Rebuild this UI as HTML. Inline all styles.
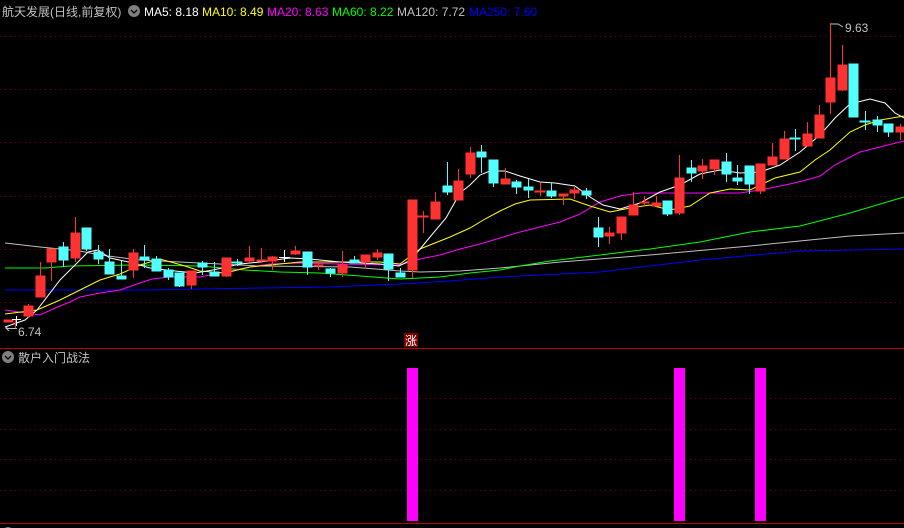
<!DOCTYPE html>
<html><head><meta charset="utf-8"><style>
html,body{margin:0;padding:0;background:#000;width:904px;height:528px;overflow:hidden}
svg{display:block}
text{font-family:"Liberation Sans","Noto Sans CJK SC",sans-serif;font-size:12px}
</style></head><body>
<svg width="904" height="528" viewBox="0 0 904 528" xmlns="http://www.w3.org/2000/svg">
<rect width="904" height="528" fill="#000"/>
<g stroke="#800000" stroke-width="1" stroke-dasharray="1 4">
<line x1="0" y1="36.5" x2="904" y2="36.5"/><line x1="0" y1="89.5" x2="904" y2="89.5"/>
<line x1="0" y1="142.5" x2="904" y2="142.5"/><line x1="0" y1="196.5" x2="904" y2="196.5"/>
<line x1="0" y1="249.5" x2="904" y2="249.5"/><line x1="0" y1="302.5" x2="904" y2="302.5"/>
<line x1="0" y1="398.5" x2="904" y2="398.5"/><line x1="0" y1="429.5" x2="904" y2="429.5"/>
<line x1="0" y1="459.5" x2="904" y2="459.5"/><line x1="0" y1="490.5" x2="904" y2="490.5"/>
</g>
<line x1="0" y1="348.5" x2="904" y2="348.5" stroke="#c00000"/>
<line x1="0" y1="523.5" x2="904" y2="523.5" stroke="#c00000"/>
<g fill="none" stroke-width="1">
<polyline stroke="#0000ff" points="5,290 60,290 150,290 200,289 260,288 330,287 400,284 450,281 500,277 600,272 700,260 800,251 904,249"/>
<polyline stroke="#c0c0c0" points="5,243 40,247 80,251 100,255 140,260 180,262 220,264 260,266 350,267 400,271 420,272 460,271 500,268 560,262 650,255 750,246 850,236 904,233"/>
<polyline stroke="#00ff00" points="5,268 45,268 70,266 140,265 200,266 245,270 280,272 320,273 400,279 440,277 470,273 500,270 520,266 550,261 600,255 650,249 700,242 750,232 800,226 850,213 904,197"/>
<polyline stroke="#ff00ff" points="5,310 40,315 55,308 70,302 80,297 100,293 120,290 140,283 152,279 170,277 200,277 220,273 250,267 270,264 300,263 340,264 400,265 420,259 440,255 460,249 480,244 500,238 520,232 540,227 560,222 580,214 600,202 620,196 640,193 740,193 760,190 790,184 810,179 820,176 835,165 860,152 880,147 904,141"/>
<polyline stroke="#ffff00" points="5,314 37,310 60,300 80,290 100,280 120,274 140,265 160,259 185,266 200,271 225,273 250,267 300,262 380,262 400,264 420,249 450,237 470,228 485,219 500,211 515,204 530,200 570,199 590,206 610,212 630,208 650,205 670,210 690,206 710,193 730,189 750,190 775,178 800,172 815,160 830,150 850,132 865,125 880,120 904,116"/>
<polyline stroke="#ffffff" points="5,327 25,320 37,310 60,280 88,252 98,250 110,258 133,263 150,268 175,271 195,273 213,270 240,264 260,262 290,258 310,259 340,262 380,264 399,266 411,260 430,237 446,218 460,193 470,185 480,175 490,171 505,171 520,176 540,182 555,183 575,186 590,197 603,205 620,209 640,203 660,192 680,185 700,174 720,170 740,173 760,172 780,165 800,152 820,135 835,118 850,104 870,99 885,103 895,113 904,118"/>
</g>
<g stroke-width="1">
<g fill="#ff3232" stroke="#ff3232">
<line x1="28.5" y1="304" x2="28.5" y2="318"/><rect x="24" y="306" width="9" height="10"/>
<line x1="40.5" y1="262" x2="40.5" y2="297"/><rect x="36" y="276" width="9" height="21"/>
<line x1="51.5" y1="249" x2="51.5" y2="281"/><rect x="47" y="249" width="9" height="13"/>
<line x1="75.5" y1="217" x2="75.5" y2="262"/><rect x="71" y="233" width="9" height="25"/>
<line x1="133.5" y1="249" x2="133.5" y2="278"/><rect x="129" y="253" width="9" height="17"/>
<line x1="191.5" y1="271" x2="191.5" y2="289"/><rect x="187" y="271" width="9" height="14"/>
<line x1="226.5" y1="258" x2="226.5" y2="277"/><rect x="222" y="258" width="9" height="18"/>
<line x1="249.5" y1="246" x2="249.5" y2="262"/><rect x="245" y="258" width="9" height="3"/>
<line x1="261.5" y1="248" x2="261.5" y2="263"/><rect x="257" y="260" width="9" height="1"/>
<line x1="272.5" y1="256" x2="272.5" y2="270"/><rect x="268" y="257" width="9" height="4"/>
<line x1="295.5" y1="246" x2="295.5" y2="255"/><rect x="291" y="251" width="9" height="3"/>
<line x1="318.5" y1="263" x2="318.5" y2="270"/><rect x="314" y="265" width="9" height="1"/>
<line x1="342.5" y1="251" x2="342.5" y2="277"/><rect x="338" y="265" width="9" height="8"/>
<line x1="365.5" y1="255" x2="365.5" y2="269"/><rect x="361" y="255" width="9" height="7"/>
<line x1="377.5" y1="249" x2="377.5" y2="260"/><rect x="373" y="253" width="9" height="4"/>
<line x1="412.5" y1="200" x2="412.5" y2="278"/><rect x="408" y="200" width="9" height="70"/>
<line x1="423.5" y1="211" x2="423.5" y2="233"/><rect x="418" y="216" width="10" height="1"/>
<line x1="435.5" y1="192" x2="435.5" y2="219"/><rect x="431" y="202" width="9" height="17"/>
<line x1="458.5" y1="169" x2="458.5" y2="200"/><rect x="454" y="181" width="9" height="19"/>
<line x1="470.5" y1="147" x2="470.5" y2="178"/><rect x="466" y="153" width="9" height="21"/>
<line x1="505.5" y1="168" x2="505.5" y2="184"/><rect x="501" y="179" width="9" height="5"/>
<line x1="540.5" y1="183" x2="540.5" y2="196"/><rect x="535" y="191" width="10" height="1"/>
<line x1="563.5" y1="194" x2="563.5" y2="205"/><rect x="559" y="194" width="9" height="2"/>
<line x1="574.5" y1="186" x2="574.5" y2="199"/><rect x="570" y="190" width="9" height="3"/>
<line x1="609.5" y1="227" x2="609.5" y2="244"/><rect x="605" y="233" width="9" height="3"/>
<line x1="621.5" y1="217" x2="621.5" y2="240"/><rect x="617" y="217" width="9" height="16"/>
<line x1="633.5" y1="192" x2="633.5" y2="215"/><rect x="629" y="205" width="9" height="10"/>
<line x1="644.5" y1="196" x2="644.5" y2="206"/><rect x="640" y="202" width="9" height="1"/>
<line x1="656.5" y1="196" x2="656.5" y2="206"/><rect x="652" y="203" width="9" height="3"/>
<line x1="679.5" y1="155" x2="679.5" y2="215"/><rect x="675" y="178" width="9" height="35"/>
<line x1="702.5" y1="159" x2="702.5" y2="179"/><rect x="698" y="166" width="9" height="5"/>
<line x1="714.5" y1="160" x2="714.5" y2="175"/><rect x="710" y="160" width="9" height="9"/>
<line x1="760.5" y1="164" x2="760.5" y2="194"/><rect x="756" y="164" width="9" height="27"/>
<line x1="772.5" y1="143" x2="772.5" y2="165"/><rect x="768" y="157" width="9" height="8"/>
<line x1="784.5" y1="131" x2="784.5" y2="159"/><rect x="780" y="139" width="9" height="20"/>
<line x1="807.5" y1="122" x2="807.5" y2="146"/><rect x="803" y="134" width="9" height="12"/>
<line x1="819.5" y1="105" x2="819.5" y2="138"/><rect x="815" y="115" width="9" height="23"/>
<line x1="830.5" y1="23" x2="830.5" y2="114"/><rect x="826" y="78" width="9" height="24"/>
<line x1="842.5" y1="45" x2="842.5" y2="91"/><rect x="838" y="65" width="9" height="25"/>
<line x1="900.5" y1="124" x2="900.5" y2="140"/><rect x="896" y="127" width="9" height="5"/>
<line x1="15.5" y1="319" x2="15.5" y2="328"/><rect x="4" y="320" width="9" height="2"/>
</g>
<g fill="#54ffff" stroke="#54ffff">
<line x1="63.5" y1="242" x2="63.5" y2="267"/><rect x="59" y="247" width="9" height="13"/>
<line x1="86.5" y1="228" x2="86.5" y2="251"/><rect x="82" y="228" width="9" height="21"/>
<line x1="98.5" y1="245" x2="98.5" y2="264"/><rect x="94" y="252" width="9" height="7"/>
<line x1="109.5" y1="249" x2="109.5" y2="274"/><rect x="105" y="262" width="9" height="12"/>
<line x1="121.5" y1="261" x2="121.5" y2="279"/><rect x="117" y="276" width="9" height="3"/>
<line x1="144.5" y1="245" x2="144.5" y2="268"/><rect x="140" y="257" width="9" height="3"/>
<line x1="156.5" y1="256" x2="156.5" y2="271"/><rect x="152" y="259" width="9" height="12"/>
<line x1="168.5" y1="268" x2="168.5" y2="280"/><rect x="164" y="270" width="9" height="7"/>
<line x1="179.5" y1="273" x2="179.5" y2="287"/><rect x="175" y="273" width="9" height="13"/>
<line x1="202.5" y1="261" x2="202.5" y2="275"/><rect x="198" y="263" width="9" height="4"/>
<line x1="214.5" y1="262" x2="214.5" y2="276"/><rect x="210" y="272" width="9" height="4"/>
<line x1="237.5" y1="259" x2="237.5" y2="266"/><rect x="232" y="262" width="10" height="1"/>
<line x1="307.5" y1="252" x2="307.5" y2="275"/><rect x="303" y="252" width="9" height="15"/>
<line x1="330.5" y1="268" x2="330.5" y2="277"/><rect x="326" y="269" width="9" height="4"/>
<line x1="354.5" y1="256" x2="354.5" y2="263"/><rect x="350" y="260" width="9" height="3"/>
<line x1="388.5" y1="254" x2="388.5" y2="281"/><rect x="384" y="254" width="9" height="15"/>
<line x1="400.5" y1="268" x2="400.5" y2="277"/><rect x="396" y="273" width="9" height="4"/>
<line x1="447.5" y1="162" x2="447.5" y2="195"/><rect x="443" y="186" width="9" height="6"/>
<line x1="481.5" y1="145" x2="481.5" y2="173"/><rect x="477" y="152" width="9" height="5"/>
<line x1="493.5" y1="160" x2="493.5" y2="187"/><rect x="489" y="160" width="9" height="23"/>
<line x1="516.5" y1="180" x2="516.5" y2="194"/><rect x="512" y="182" width="9" height="5"/>
<line x1="528.5" y1="179" x2="528.5" y2="198"/><rect x="524" y="187" width="9" height="3"/>
<line x1="551.5" y1="183" x2="551.5" y2="198"/><rect x="547" y="191" width="9" height="5"/>
<line x1="586.5" y1="188" x2="586.5" y2="199"/><rect x="582" y="191" width="9" height="4"/>
<line x1="598.5" y1="217" x2="598.5" y2="247"/><rect x="594" y="228" width="9" height="9"/>
<line x1="667.5" y1="201" x2="667.5" y2="216"/><rect x="663" y="201" width="9" height="13"/>
<line x1="691.5" y1="160" x2="691.5" y2="182"/><rect x="687" y="168" width="9" height="5"/>
<line x1="726.5" y1="153" x2="726.5" y2="182"/><rect x="722" y="162" width="9" height="12"/>
<line x1="737.5" y1="165" x2="737.5" y2="185"/><rect x="733" y="178" width="9" height="3"/>
<line x1="749.5" y1="166" x2="749.5" y2="194"/><rect x="745" y="166" width="9" height="18"/>
<line x1="795.5" y1="129" x2="795.5" y2="151"/><rect x="790" y="138" width="10" height="1"/>
<line x1="853.5" y1="64" x2="853.5" y2="117"/><rect x="849" y="64" width="9" height="53"/>
<line x1="865.5" y1="111" x2="865.5" y2="130"/><rect x="860" y="121" width="10" height="1"/>
<line x1="877.5" y1="116" x2="877.5" y2="132"/><rect x="873" y="120" width="9" height="5"/>
<line x1="888.5" y1="124" x2="888.5" y2="137"/><rect x="884" y="124" width="9" height="8"/>
</g>
<g stroke="#fff"><line x1="284.5" y1="250" x2="284.5" y2="262"/><line x1="279" y1="257.5" x2="290" y2="257.5"/>
<line x1="16.5" y1="316" x2="16.5" y2="326"/><line x1="12" y1="319.5" x2="21" y2="319.5"/></g>
</g>
<g stroke="#c0c0c0" fill="none"><line x1="6" y1="328.5" x2="17" y2="328.5"/><polyline points="9,325 6,328 9,331"/>
<polyline points="831,24 838,24 843,27"/></g>
<text x="18" y="336" fill="#c0c0c0">6.74</text>
<text x="845" y="32" fill="#c0c0c0">9.63</text>
<rect x="404" y="333" width="14" height="14" fill="#800000"/>
<text x="405" y="345" fill="#fff">涨</text>
<text x="2" y="16" fill="#c0c0c0">航天发展(日线,前复权)</text>
<circle cx="134" cy="11" r="6" fill="#808080"/><polyline points="131,10 134,13 137,10" stroke="#000" fill="none" stroke-width="1.3"/>
<text x="144" y="16" fill="#ffffff">MA5: 8.18</text>
<text x="202" y="16" fill="#ffff00">MA10: 8.49</text>
<text x="267" y="16" fill="#ff00ff">MA20: 8.63</text>
<text x="332" y="16" fill="#00ff00">MA60: 8.22</text>
<text x="397" y="16" fill="#c0c0c0">MA120: 7.72</text>
<text x="469" y="16" fill="#0000ff">MA250: 7.60</text>
<circle cx="8" cy="357" r="6" fill="#808080"/><polyline points="5,356 8,359 11,356" stroke="#000" fill="none" stroke-width="1.3"/>
<text x="18" y="362" fill="#c0c0c0">散户入门战法</text>
<rect x="407" y="368" width="11" height="153" fill="#ff00ff"/>
<rect x="674" y="368" width="11" height="153" fill="#ff00ff"/>
<rect x="755" y="368" width="11" height="153" fill="#ff00ff"/>
<circle cx="8" cy="533" r="6" fill="#808080"/>
<text x="18" y="537" fill="#c0c0c0">VOL: 12.34</text>
<text x="104" y="537" fill="#ffffff">9.63</text>
<text x="163" y="537" fill="#ffff00">7.81 5.37</text>
<text x="222" y="537" fill="#ff00ff">VOL: 8.83</text>
</svg>
</body></html>
